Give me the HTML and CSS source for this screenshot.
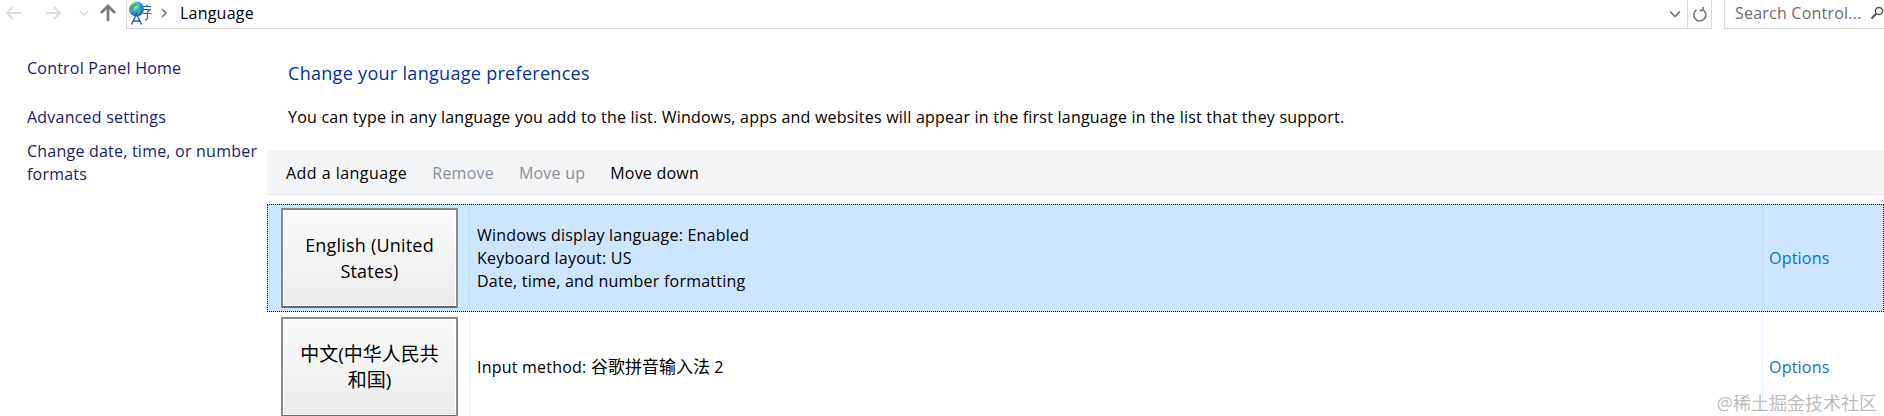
FILE: index.html
```html
<!DOCTYPE html>
<html lang="en">
<head>
<meta charset="utf-8">
<title>Language</title>
<link rel="stylesheet" href="styles.css">
</head>
<body>
<header class="nav">
  <div class="nav-buttons">
    <svg class="nav-icon back" width="18" height="16" viewBox="0 0 18 16"><path d="M16 8H2M8 2L2 8l6 6" fill="none" stroke="#dcdcdc" stroke-width="2"/></svg>
    <svg class="nav-icon fwd" width="18" height="16" viewBox="0 0 18 16"><path d="M2 8h14M10 2l6 6-6 6" fill="none" stroke="#dcdcdc" stroke-width="2"/></svg>
    <svg class="nav-icon down" width="10" height="8" viewBox="0 0 10 8"><path d="M1 2l4 4 4-4" fill="none" stroke="#dcdcdc" stroke-width="1.5"/></svg>
    <svg class="nav-icon up" width="18" height="18" viewBox="0 0 18 18"><path d="M9 17V3M2 9l7-7 7 7" fill="none" stroke="#7a7a7a" stroke-width="2.8"/></svg>
  </div>
  <div class="address">
    <svg class="globe" width="23" height="25" viewBox="0 0 23 25">
      <defs>
        <radialGradient id="sea" cx="0.35" cy="0.3" r="0.8">
          <stop offset="0" stop-color="#d5efff"/>
          <stop offset="0.5" stop-color="#2f9ae0"/>
          <stop offset="1" stop-color="#0f4fae"/>
        </radialGradient>
      </defs>
      <circle cx="7.5" cy="8" r="7.5" fill="url(#sea)"/>
      <path d="M1.500 6c2-3 4-4 6-4 1 2 0 3-2 4-1 2-1 4-3 4C1 9 1 7 1.500 6zM8 9c2-1 3-1 4 0 0 2-1 4-3 5-1-1-2-3-1-5z" fill="#4fae3a"/>
      <path d="M2.500 23.500L7.500 13l5 10.500M4.500 20h6" fill="none" stroke="#1f55d8" stroke-width="1.400"/>
      <path d="M14 5.500h8M18 3.500v2M15 8.500h6l-2.500 2.500M14 12.500h8.500M18.500 11v5.500c0 1.500-.8 2.500-2.500 2.500" fill="none" stroke="#1f55d8" stroke-width="1.100"/>
    </svg>
    <svg class="crumb" width="7" height="10" viewBox="0 0 7 10"><path d="M1 1l4 4-4 4" fill="none" stroke="#777" stroke-width="1.6"/></svg>
    <span class="crumb-text">Language</span>
    <svg class="drop" width="12" height="8" viewBox="0 0 12 8"><path d="M1 1.500l5 5 5-5" fill="none" stroke="#666" stroke-width="1.5"/></svg>
    <span class="refresh">
      <svg width="16" height="18" viewBox="0 0 16 18"><path d="M4.500 3.500A6 6 0 1 0 11 3.400M11 .5v3.400H7.500" transform="translate(0 1.500)" fill="none" stroke="#777" stroke-width="1.6"/></svg>
    </span>
  </div>
  <div class="search">
    <span class="search-text">Search Control...</span>
    <svg width="14" height="14" viewBox="0 0 14 14"><circle cx="9" cy="5" r="3.600" fill="none" stroke="#555" stroke-width="1.500"/><path d="M6.200 7.800L1.500 12.500" stroke="#555" stroke-width="2"/></svg>
  </div>
</header>
<div class="body">
  <aside class="sidebar">
    <a class="side-link home">Control Panel Home</a>
    <a class="side-link adv">Advanced settings</a>
    <a class="side-link">Change date, time, or number formats</a>
  </aside>
  <main class="main">
    <h1 class="title">Change your language preferences</h1>
    <p class="intro">You can type in any language you add to the list. Windows, apps and websites will appear in the first language in the list that they support.</p>
    <div class="toolbar">
      <span class="tool first">Add a language</span>
      <span class="tool off">Remove</span>
      <span class="tool off">Move up</span>
      <span class="tool">Move down</span>
    </div>
    <div class="row selected">
      <div class="lang-cell"><button class="lang">English (United States)</button></div>
      <div class="details">
        <div>Windows display language: Enabled</div>
        <div>Keyboard layout: US</div>
        <div>Date, time, and number formatting</div>
      </div>
      <div class="options">Options</div>
    </div>
    <div class="row">
      <div class="lang-cell"><button class="lang lang-cjk">中文(中华人民共和国)</button></div>
      <div class="details">
        <div>Input method: <span class="cjk">谷歌拼音输入法</span> 2</div>
      </div>
      <div class="options">Options</div>
    </div>
  </main>
</div>
<div class="watermark">@稀土掘金技术社区</div>
</body>
</html>
```
FILE: styles.css
```css
* { box-sizing: border-box; }
html, body { margin: 0; padding: 0; height: 416px; overflow: hidden; background: #fff; }
body {
  position: relative;
  font-family: "Open Sans", "Noto Sans CJK SC", sans-serif;
  font-size: 16px;
  letter-spacing: 0.22px;
  color: #000;
}
.nav { display: flex; height: 29px; }
.nav-buttons { width: 126px; display: flex; align-items: center; padding: 0 0 3px 5px; }
.nav-icon { flex: none; }
.back { margin-right: 21px; }
.fwd { margin-right: 17px; }
.down { margin-right: 10px; }
.address {
  flex: 1;
  display: flex;
  align-items: center;
  border-left: 1px solid #d9d9d9;
  border-right: 1px solid #d9d9d9;
  border-bottom: 1px solid #d9d9d9;
  padding-left: 2px;
  min-width: 0;
}
.globe { flex: none; margin-bottom: 2px; }
.crumb { margin: 0 0 2px 9px; }
.crumb-text { margin: 0 0 2px 12px; flex: 1; }
.drop { margin-right: 6px; }
.refresh { width: 24px; height: 28px; border-left: 1px solid #d9d9d9; display: flex; align-items: center; justify-content: center; }
.search {
  width: 160px;
  margin-left: 12px;
  display: flex;
  align-items: center;
  justify-content: space-between;
  padding: 0 0 2px 10px;
  border-left: 1px solid #d9d9d9;
  border-bottom: 1px solid #d9d9d9;
  color: #6d6d6d;
  white-space: nowrap;
}
.body { display: flex; }
.sidebar { width: 267px; flex: none; padding: 28px 0 0 27px; display: flex; flex-direction: column; }
.side-link { color: #1a1a6e; line-height: 23px; width: 235px; }
.home { margin-bottom: 26px; }
.adv { margin-bottom: 11px; }
.main { flex: 1; min-width: 0; }
.title { margin: 31px 0 0 21px; font-size: 18px; letter-spacing: 0.3px; font-weight: 400; line-height: 26px; color: #0033a0; }
.intro { margin: 20px 0 0 21px; line-height: 23px; white-space: nowrap; }
.toolbar {
  margin-top: 21px;
  height: 45px;
  background: #f4f5f7;
  border-bottom: 1px solid #e6e6e6;
  display: flex;
  align-items: center;
  padding: 1px 0 0 19px;
  gap: 25px;
}
.first { letter-spacing: 0.47px; }
.off { color: #8a8f99; }
.row { display: flex; height: 108px; margin-top: 1px; }
.row.selected { margin-top: 9px; background: #cce6ff; outline: 1px dotted #000; outline-offset: -1px; margin-bottom: 1px; }
.lang-cell { width: 203px; flex: none; padding: 4px 11px 0 14px; border-right: 1px solid #e5f0ff; }
.selected .lang-cell, .selected .details { border-color: #bcdcfa; }
.lang {
  width: 177px;
  height: 100px;
  padding: 0 17px;
  border: 2px solid #8a8a8a;
  border-bottom-color: #6a6a6a;
  box-shadow: inset 0 0 0 1px #fff;
  background: linear-gradient(#fafafa, #ececec);
  font: inherit;
  font-size: 18px;
  letter-spacing: 0.2px;
  line-height: 26px;
  color: #000;
}
.lang-cjk { font-size: 19px; letter-spacing: 0; padding: 0 12px; }
.details {
  flex: 1;
  display: flex;
  flex-direction: column;
  justify-content: center;
  padding-left: 7px;
  line-height: 23px;
  border-right: 1px solid #e5f0ff;
}
.cjk { font-size: 17px; letter-spacing: 0; }
.options { width: 121px; flex: none; display: flex; align-items: center; padding-left: 6px; color: #0a6fdc; }
.watermark {
  position: absolute;
  right: 7px;
  bottom: 1px;
  font-size: 18px;
  letter-spacing: 0;
  color: rgba(120, 120, 120, 0.5);
  white-space: nowrap;
}
```
